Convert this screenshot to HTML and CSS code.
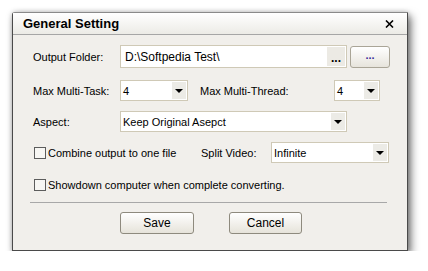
FILE: index.html
```html
<!DOCTYPE html>
<html lang="en">

  <head>
    <meta charset="UTF-8">
    <title>General Setting</title>
    <link rel="stylesheet" href="styles.css">
  </head>

  <body>

    <div class="window">
      <div class="titlebar">
        <span class="title">General Setting</span>
        <svg class="close" width="9" height="8" viewBox="0 0 9 8">
          <path d="M1 0.5 L8 7.5 M8 0.5 L1 7.5" stroke="#000" stroke-width="1.6" fill="none"/>
        </svg>
      </div>

      <div class="content">
        <div class="row row-first">
          <span class="label">Output Folder:</span>
          <div class="field">
            <span class="field-text">D:\Softpedia Test\</span>
            <span class="field-btn">...</span>
          </div>
          <button class="browse-btn">...</button>
        </div>

        <div class="row row-second">
          <span class="label">Max Multi-Task:</span>
          <div class="select sel-task"><span>4</span><i class="arrow"></i></div>
          <span class="label label-thread">Max Multi-Thread:</span>
          <div class="select sel-thread"><span>4</span><i class="arrow"></i></div>
        </div>

        <div class="row">
          <span class="label">Aspect:</span>
          <div class="select sel-aspect"><span>Keep Original Asepct</span><i class="arrow"></i></div>
        </div>

        <div class="row">
          <label class="check check-combine"><span class="box"></span>Combine output to one file</label>
          <span class="label label-split">Split Video:</span>
          <div class="select sel-split"><span>Infinite</span><i class="arrow"></i></div>
        </div>

        <div class="row row-check">
          <label class="check"><span class="box"></span>Showdown computer when complete converting.</label>
        </div>

        <div class="separator"></div>

        <div class="buttons">
          <button class="btn btn-save">Save</button>
          <button class="btn btn-cancel">Cancel</button>
        </div>
      </div>
    </div>

  </body>

</html>
```

FILE: styles.css
```css
body {
  margin: 0;
  padding: 0;
  background: #ffffff;
  font-family: 'Liberation Sans', Arial, sans-serif;
  font-size: 11px;
  color: #000000;
}

.window {
  margin: 12px 0 0 12px;
  width: 394px;
  height: 237px;
  background: #f1efeb;
  border: 1px solid #4a4a4a;
  border-top-color: #8a8a8a;
  border-top-left-radius: 3px;
  box-shadow: 3px 4px 8px rgba(0, 0, 0, 0.55), 0 0 5px rgba(0, 0, 0, 0.2);
}

.titlebar {
  height: 21px;
  display: flex;
  align-items: center;
  justify-content: space-between;
  padding: 0 13px 0 10px;
  background: linear-gradient(#ffffff, #ecebe6);
  border-bottom: 1px solid #a6a6a6;
}

.title {
  font-weight: bold;
  font-size: 13px;
}

.content {
  padding: 10px 0 0 20px;
}

.row {
  display: flex;
  align-items: center;
  height: 21px;
  margin-top: 10px;
}

.row-first {
  height: 23px;
  margin-top: 0;
}

.row-second {
  margin-top: 12px;
}

.row-check {
  margin-top: 11px;
}

.label {
  width: 87px;
  flex-shrink: 0;
}

.label-thread {
  width: 134px;
  margin-left: 12px;
}

.label-split {
  width: 70px;
}

.field {
  box-sizing: border-box;
  width: 227px;
  height: 23px;
  display: flex;
  align-items: center;
  justify-content: space-between;
  background: #ffffff;
  border: 1px solid #cfc9b6;
}

.field-text {
  padding-left: 4px;
  font-size: 12px;
}

.field-btn {
  width: 18px;
  height: 19px;
  margin-right: 1px;
  background: #eceae4;
  font-weight: bold;
  text-align: center;
  line-height: 22px;
  font-size: 12px;
}

.browse-btn {
  box-sizing: border-box;
  width: 40px;
  height: 22px;
  margin-left: 3px;
  border: 1px solid #aaa597;
  border-radius: 3px;
  background: linear-gradient(#ffffff, #e7e4dc);
  color: #3a2c9a;
  font-family: inherit;
  font-size: 11px;
  font-weight: bold;
  line-height: 12px;
  padding: 0 0 4px;
}

.select {
  box-sizing: border-box;
  height: 21px;
  display: flex;
  align-items: center;
  justify-content: space-between;
  background: #ffffff;
  border: 1px solid #cfc9b6;
  padding-left: 2px;
}

.select span {
  font-size: 11px;
  padding-top: 1px;
}

.sel-task {
  width: 68px;
}

.sel-thread {
  width: 46px;
}

.sel-aspect {
  width: 227px;
}

.sel-split {
  width: 118px;
}

.arrow {
  width: 14px;
  height: 17px;
  margin-right: 1px;
  background: #ecebe6;
  position: relative;
}

.arrow::after {
  content: "";
  position: absolute;
  left: 3px;
  top: 7px;
  border-left: 4px solid transparent;
  border-right: 4px solid transparent;
  border-top: 4px solid #000000;
}

.check {
  display: flex;
  align-items: center;
  margin-left: 1px;
}

.check-combine {
  width: 167px;
}

.box {
  box-sizing: border-box;
  width: 12px;
  height: 12px;
  margin-right: 2px;
  border: 1px solid #5c5c5c;
  background: #f7f6f3;
}

.separator {
  width: 357px;
  height: 1px;
  margin: 7px 0 0 -3px;
  background: #a8a8a8;
}

.buttons {
  display: flex;
  margin: 9px 0 0 87px;
  gap: 35px;
}

.btn {
  box-sizing: border-box;
  width: 74px;
  height: 22px;
  border: 1px solid #8e8a7e;
  border-radius: 3px;
  background: linear-gradient(#ffffff, #e6e3da);
  font-family: inherit;
  font-size: 12px;
  padding: 0;
}

.btn-cancel {
  width: 73px;
}
```
